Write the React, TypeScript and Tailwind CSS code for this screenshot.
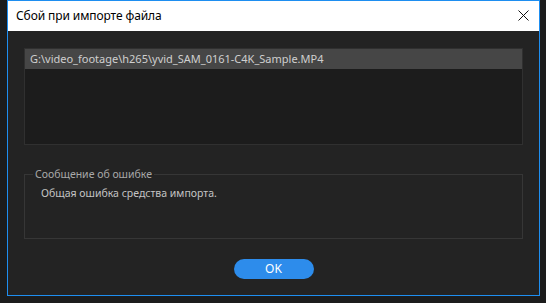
export default function App() {
  return (
    <div className="w-[546px] h-[303px] bg-[#1c1c1c] pl-[7px] font-['Noto_Sans',sans-serif]">
      <div className="w-[533px] h-[296px] border border-[#1e8ef0] flex flex-col bg-[#232323]">
        {/* title bar */}
        <div className="h-[30px] bg-white flex items-center justify-between pl-[8px] pr-[10px] shrink-0">
          <span className="text-[12px] text-black tracking-[-0.1px]">Сбой при импорте файла</span>
          <svg width="11" height="11" viewBox="0 0 11 11" className="mb-[1px]">
            <path d="M0.5 0.5 L10.5 10.5 M10.5 0.5 L0.5 10.5" stroke="#111" strokeWidth="1" />
          </svg>
        </div>

        <div className="flex flex-col px-[16px] pt-[17px]">
          {/* file list */}
          <div className="h-[97px] bg-[#1c1c1c] border border-[#303030]">
            <div className="h-[20px] bg-[#464646] flex items-center pl-[5px] text-[11px] text-[#cfcfcf]">
              G:\video_footage\h265\yvid_SAM_0161-C4K_Sample.MP4
            </div>
          </div>

          {/* error group */}
          <fieldset className="mt-[21px] h-[73px] border border-[#363636] px-[16px]">
            <legend className="ml-[-8px] px-[2px] text-[10.5px] text-[#a8a8a8] leading-[16px]">
              Сообщение об ошибке
            </legend>
            <div className="mt-[4px] text-[10.5px] text-[#c4c4c4]">Общая ошибка средства импорта.</div>
          </fieldset>

          <div className="flex justify-center mt-[20px]">
            <button className="w-[80px] h-[20px] rounded-full bg-[#2d8ceb] text-white text-[12px] leading-none">
              OK
            </button>
          </div>
        </div>
      </div>
    </div>
  )
}
